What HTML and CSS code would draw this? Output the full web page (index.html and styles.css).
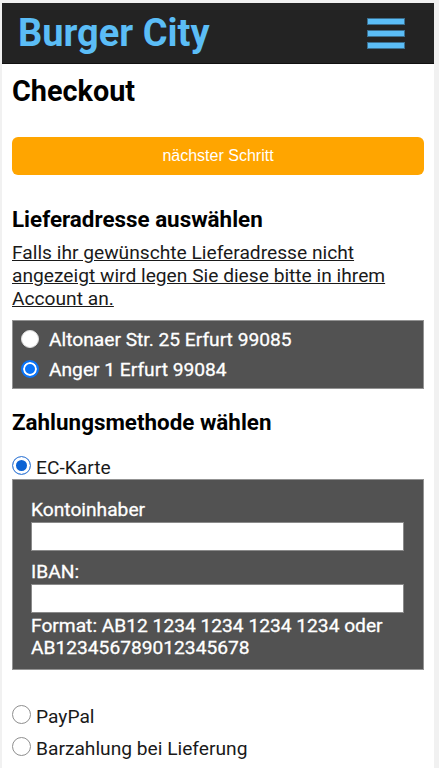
FILE: index.html
```html
<!DOCTYPE html>
<html lang="de">
<head>
<meta charset="utf-8">
<title>Burger City – Checkout</title>
<link rel="stylesheet" href="styles.css">
</head>
<body>
<div class="page">
  <header class="topbar">
    <span class="brand">Burger City</span>
    <span class="menu" aria-label="Menü"><i></i><i></i><i></i></span>
  </header>
  <main class="content">
    <h1 class="title">Checkout</h1>
    <button class="next" type="button">nächster Schritt</button>
    <h2 class="section">Lieferadresse auswählen</h2>
    <p class="hint">Falls ihr gewünschte Lieferadresse nicht angezeigt wird legen Sie diese bitte in ihrem Account an.</p>
    <div class="darkbox addresses">
      <label class="opt"><input type="radio" name="addr" class="radio radio-light"> Altonaer Str. 25 Erfurt 99085</label>
      <label class="opt"><input type="radio" name="addr" class="radio radio-light" checked> Anger 1 Erfurt 99084</label>
    </div>
    <h2 class="section pay">Zahlungsmethode wählen</h2>
    <label class="payopt first"><input type="radio" name="pay" class="radio radio-main" checked> EC-Karte</label>
    <div class="darkbox ecform">
      <label class="field-label" for="owner">Kontoinhaber</label>
      <input id="owner" class="field" type="text">
      <label class="field-label" for="iban">IBAN:</label>
      <input id="iban" class="field" type="text">
      <div class="format">Format: AB12 1234 1234 1234 1234 oder AB123456789012345678</div>
    </div>
    <div class="others">
      <label class="payopt"><input type="radio" name="pay" class="radio radio-main"> PayPal</label>
      <label class="payopt"><input type="radio" name="pay" class="radio radio-main"> Barzahlung bei Lieferung</label>
    </div>
  </main>
</div>
</body>
</html>
```
FILE: styles.css
```css
html, body {
  margin: 0;
  padding: 0;
  background: #f1f1f1;
}
body {
  font-family: Roboto, "Liberation Sans", sans-serif;
  font-size: 19.2px;
  color: #1a1a1a;
  overflow: hidden;
}
.page {
  margin: 3px 5px 0 2px;
  background: #fff;
  min-height: 765px;
}
.topbar {
  height: 61px;
  background: #232323;
  display: flex;
  align-items: center;
  justify-content: space-between;
  padding: 0 30px 0 16px;
  border-bottom: 1px solid #111;
  box-sizing: border-box;
}
.brand {
  color: #5bbdf6;
  font-weight: 700;
  font-size: 38px;
}
.menu {
  display: flex;
  flex-direction: column;
  gap: 7px;
}
.menu i {
  display: block;
  width: 36px;
  height: 5px;
  background: #5bbdf6;
  box-shadow: 0 0 0 1px #3a6f90;
}
.content {
  padding: 0 10px;
}
.title {
  margin: 0;
  padding-top: 10px;
  font-size: 28.8px;
  font-weight: 700;
  line-height: 34px;
  color: #000;
}
.next {
  display: block;
  width: 100%;
  margin-top: 29px;
  height: 38px;
  border: none;
  border-radius: 6px;
  background: #ffa500;
  color: #fff;
  font-family: "Liberation Sans", Arial, sans-serif;
  font-size: 16px;
}
.section {
  margin: 31px 0 0;
  font-size: 22.4px;
  font-weight: 700;
  line-height: 26px;
  color: #000;
}
.hint {
  margin: 9px 0 0;
  font-size: 19.2px;
  line-height: 23px;
  text-decoration: underline;
  color: #1a1a1a;
}
.darkbox {
  background: #525252;
  border: 1px solid #939393;
  color: #fff;
  -webkit-text-stroke: 0.3px #fff;
}
.addresses {
  margin-top: 10px;
  padding: 7px 8px 6px;
  display: flex;
  flex-direction: column;
  gap: 6px;
}
.opt {
  display: flex;
  align-items: center;
  gap: 10px;
  font-size: 19.2px;
  font-weight: 400;
  line-height: 24px;
}
.radio {
  appearance: none;
  -webkit-appearance: none;
  margin: 0;
  border-radius: 50%;
  box-sizing: border-box;
  flex: none;
}
.radio-light {
  width: 18px;
  height: 18px;
  margin-top: -3px;
  background: #fff;
  border: 1px solid #ddd;
}
.radio-light:checked {
  background: #0a74f8;
  border: 2px solid #0a74f8;
  box-shadow: inset 0 0 0 2px #fff;
}
.pay {
  margin-top: 20px;
}
.payopt {
  display: flex;
  align-items: flex-start;
  gap: 5px;
  font-size: 19.2px;
  line-height: 23px;
  color: #1a1a1a;
}
.payopt.first {
  margin-top: 21px;
}
.radio-main {
  width: 19px;
  height: 19px;
  background: #fff;
  border: 1px solid #8f8f8f;
}
.radio-main:checked {
  border: 1px solid #4a86d8;
  background: #0a62d4;
  box-shadow: inset 0 0 0 3px #fff;
}
.ecform {
  padding: 19px 19px 10px 18px;
  display: flex;
  flex-direction: column;
}
.field-label {
  font-size: 19.2px;
  font-weight: 400;
  line-height: 22px;
}
.field {
  margin: 1px 0 10px;
  height: 29px;
  box-sizing: border-box;
  border: 1px solid #8a8a8a;
  background: #fff;
  padding: 0 4px;
  font-size: 16px;
}
.format {
  margin-top: -8px;
  font-size: 19.2px;
  font-weight: 400;
  line-height: 22px;
}
.others {
  margin-top: 35px;
  display: flex;
  flex-direction: column;
  gap: 9px;
}
```
